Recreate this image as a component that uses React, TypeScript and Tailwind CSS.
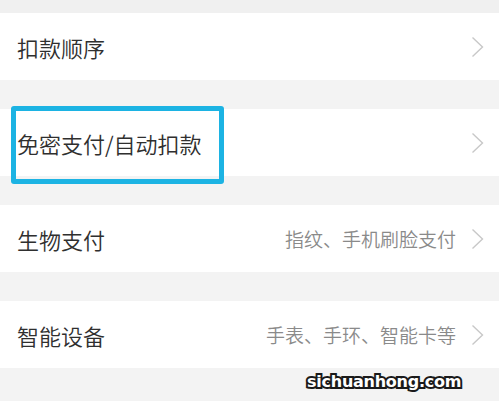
import React from 'react';

const rows = [
  { title: '扣款顺序', hint: '' },
  { title: '免密支付/自动扣款', hint: '' },
  { title: '生物支付', hint: '指纹、手机刷脸支付' },
  { title: '智能设备', hint: '手表、手环、智能卡等' },
];

function Chevron() {
  return (
    <svg width="13" height="22" viewBox="0 0 13 22" className="shrink-0">
      <polyline points="1.5,1.5 11.5,11 1.5,20.5" fill="none" stroke="#c8c8c8" strokeWidth="1.4" />
    </svg>
  );
}

export default function App() {
  return (
    <div className="relative w-[499px] h-[401px] bg-[#f3f3f3] overflow-hidden font-['Noto_Sans_CJK_SC','Noto_Sans',sans-serif]">
      <div className="h-[13px] bg-[#f0f0f0]" />
      <div className="flex flex-col gap-[29px]">
        {rows.map((row) => (
          <div key={row.title} className="h-[67px] bg-white flex items-center pl-[17px] pr-[15px]">
            <span className="text-[22px] font-[350] text-[#2f2f2f] leading-none">{row.title}</span>
            <div className="flex-1" />
            {row.hint && (
              <span className="text-[19px] font-[350] text-[#8a8a8a] leading-none mr-[15px]">{row.hint}</span>
            )}
            <Chevron />
          </div>
        ))}
      </div>

      {/* highlight box */}
      <div className="absolute left-[11px] top-[106px] w-[213px] h-[78px] border-[5px] border-[#1cb3e3] rounded-[3px]" />

      {/* watermark */}
      <div className="absolute left-[307px] top-[370px] text-[16px] font-bold text-white tracking-[-0.25px] font-['DejaVu_Sans',sans-serif] [-webkit-text-stroke:4px_#1a1a1a] [paint-order:stroke_fill]">
        sichuanhong.com
      </div>
    </div>
  );
}
